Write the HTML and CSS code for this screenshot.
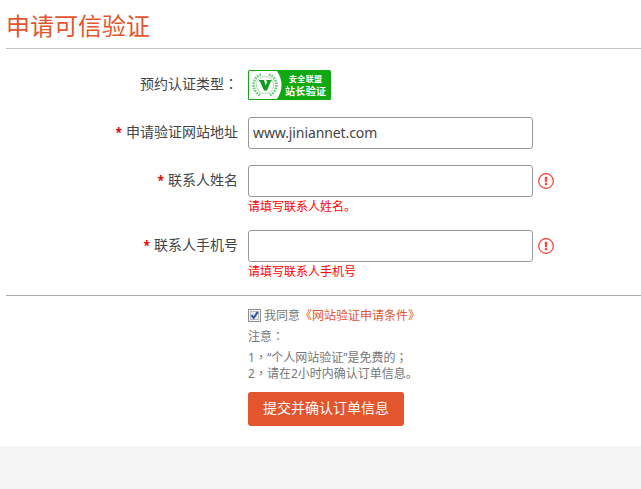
FILE: index.html
```html
<!DOCTYPE html>
<html lang="zh-CN">
<head>
<meta charset="utf-8">
<title>申请可信验证</title>
<link rel="stylesheet" href="styles.css">
</head>
<body>
<main class="page">
  <h1 class="title">申请可信验证</h1>
  <form class="form">
    <div class="row row-type">
      <div class="label">预约认证类型<span class="mid" lang="zh-TW">：</span></div>
      <svg class="badge" width="83" height="30" viewBox="0 0 83 30">
        <rect width="83" height="30" rx="1.5" fill="#12a812"/>
        <path d="M1 1H29Q38 15 29 29H1Z" fill="#fff"/>
        <g fill="none" stroke="#3cb548">
          <path d="M13 4.6A11 11 0 0 0 13 25.4M21 4.6A11 11 0 0 1 21 25.4" stroke-width="2.8" stroke-dasharray="1.7 1" opacity=".7"/>
          <circle cx="17" cy="15" r="8.6" stroke-width=".6" opacity=".7"/>
        </g>
        <path d="M11 10H16L17.7 15.5L19.3 11.5H18.5V10H23.5V11.5H22.7L19 20.5H16L12 11.5H11Z" fill="#0a9c1c"/>
        <text class="badge-top" x="41" y="12" textLength="33">安全联盟</text>
        <text class="badge-bottom" x="37" y="24.5" textLength="41">站长验证</text>
      </svg>
    </div>
    <div class="row row-site">
      <label class="label" for="site"><b class="star">*</b>申请验证网站地址</label>
      <input class="input" id="site" type="text" value="www.jiniannet.com">
    </div>
    <div class="row row-field">
      <label class="label" for="name"><b class="star">*</b>联系人姓名</label>
      <div class="field">
        <input class="input" id="name" type="text">
        <div class="error">请填写联系人姓名。</div>
      </div>
      <svg class="alert" width="16" height="16" viewBox="0 0 16 16"><circle cx="8" cy="8" r="7.3" fill="none" stroke="#fa3c32" stroke-width="1.2"/><path d="M7 4H9L8.8 9H7.2ZM7 10.2H9V12H7Z" fill="#fa3c32" stroke="#fa3c32" stroke-width=".4"/></svg>
    </div>
    <div class="row row-field">
      <label class="label" for="phone"><b class="star">*</b>联系人手机号</label>
      <div class="field">
        <input class="input" id="phone" type="text">
        <div class="error">请填写联系人手机号</div>
      </div>
      <svg class="alert" width="16" height="16" viewBox="0 0 16 16"><circle cx="8" cy="8" r="7.3" fill="none" stroke="#fa3c32" stroke-width="1.2"/><path d="M7 4H9L8.8 9H7.2ZM7 10.2H9V12H7Z" fill="#fa3c32" stroke="#fa3c32" stroke-width=".4"/></svg>
    </div>
    <section class="confirm">
      <div class="agree">
        <svg class="check" width="13" height="13" viewBox="0 0 13 13"><rect x=".5" y=".5" width="12" height="12" fill="#f4f4f4" stroke="#8e8f8f"/><rect x="2.5" y="2.5" width="8" height="8" fill="#e3e6ea" stroke="#b9bec5"/><path d="M3.5 6.2L5.7 9L9.7 3" fill="none" stroke="#354f93" stroke-width="1.9"/></svg>
        <span>我同意<a class="terms">《网站验证申请条件》</a></span>
      </div>
      <p class="note">注意<span class="mid" lang="zh-TW">：</span></p>
      <p class="rules">1<span class="mid" lang="zh-TW">，</span>“个人网站验证”是免费的<span class="mid" lang="zh-TW">；</span><br>2<span class="mid" lang="zh-TW">，</span>请在2小时内确认订单信息。</p>
      <button class="submit" type="button">提交并确认订单信息</button>
    </section>
  </form>
</main>
</body>
</html>
```
FILE: styles.css
```css
* { box-sizing: border-box; }
body {
  margin: 0;
  height: 489px;
  overflow: hidden;
  background: #f5f5f5;
  color: #444;
  font: 14px/20px "Noto Sans", "Noto Sans CJK SC", sans-serif;
}
.page {
  height: 446px;
  padding-left: 6px;
  background: #fff;
}
.title {
  height: 49px;
  margin: 0;
  padding-top: 8px;
  border-bottom: 1px solid #c4c4c4;
  color: #e2552d;
  font-size: 24px;
  font-weight: 400;
  line-height: 36px;
}
.row { display: flex; align-items: flex-start; }
.label {
  width: 232px;
  margin-right: 10px;
  padding-top: 5px;
  text-align: right;
  white-space: nowrap;
}
.mid { font-family: "Noto Sans CJK TC", sans-serif; line-height: 1; }
.star { margin-right: 4px; color: #d00; font-size: 12px; line-height: 1; }
.row-type { padding-top: 21px; height: 68px; }
.row-type .label { padding-top: 4px; }
.row-site { height: 48px; }
.row-field { height: 65px; }
.badge text {
  fill: #fff;
  font-family: "Noto Sans CJK SC", sans-serif;
  font-weight: 700;
}
.badge-top { font-size: 8px; }
.badge-bottom { font-size: 10px; }
.input {
  display: block;
  width: 285px;
  height: 32px;
  padding: 0 4px 2px;
  border: 1px solid #999;
  border-radius: 3px;
  background: #fff;
  color: #444;
  font: inherit;
  letter-spacing: -.1px;
}
.error {
  padding-top: 1px;
  color: #f00;
  font-size: 12px;
  line-height: 18px;
}
.alert { margin: 8px 0 0 5px; }
.confirm {
  padding: 11px 0 0 242px;
  border-top: 1px solid #aaa;
  color: #777;
  font-size: 12px;
  line-height: 18px;
}
.agree { display: flex; align-items: center; gap: 3px; }
.check { margin-bottom: 2px; }
.terms { color: #e2552d; }
.note { margin: 3px 0 4px; }
.rules { margin: 0 0 10px; line-height: 16px; }
.submit {
  display: block;
  width: 156px;
  height: 34px;
  padding: 0 0 2px;
  border: 0;
  border-radius: 3px;
  background: #e2552d;
  color: #fff;
  font: inherit;
  font-size: 14px;
}
```
